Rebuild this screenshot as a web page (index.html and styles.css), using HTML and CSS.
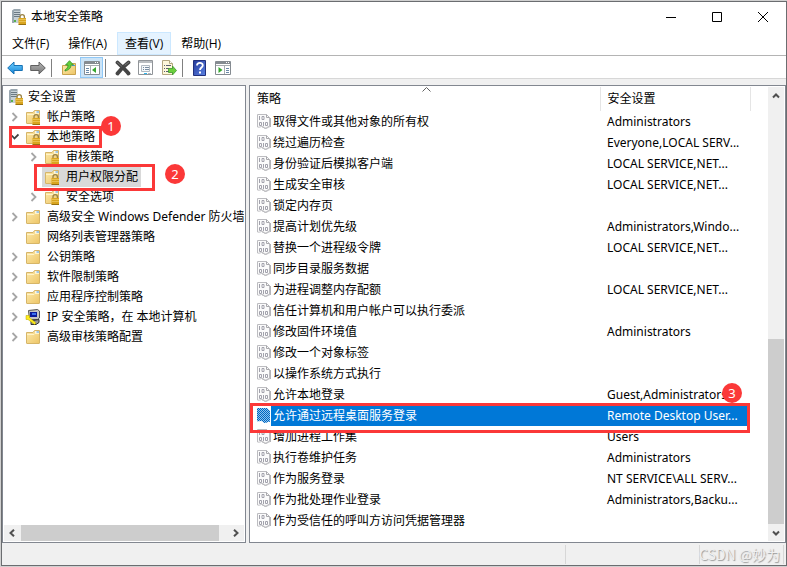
FILE: index.html
```html
<!DOCTYPE html>
<html lang="zh-CN">
<head>
    <meta charset="UTF-8">
    <meta name="viewport" content="width=device-width, initial-scale=1.0">
    <title>本地安全策略</title>
    <link rel="stylesheet" href="styles.css">
</head>
<body>

<!-- Icon shapes -->
<svg class="sprite" aria-hidden="true">
    <defs>
        <linearGradient id="gold" x1="0" y1="0" x2="1" y2="1">
            <stop offset="0" stop-color="#fdeaac"/>
            <stop offset="1" stop-color="#edc566"/>
        </linearGradient>
        <linearGradient id="blue" x1="0" y1="0" x2="0" y2="1">
            <stop offset="0" stop-color="#6fd0ff"/>
            <stop offset="1" stop-color="#1483d6"/>
        </linearGradient>
        <linearGradient id="grey" x1="0" y1="0" x2="0" y2="1">
            <stop offset="0" stop-color="#b5b5b5"/>
            <stop offset="1" stop-color="#777"/>
        </linearGradient>
        <linearGradient id="helpBlue" x1="0" y1="0" x2="1" y2="1">
            <stop offset="0" stop-color="#24399b"/>
            <stop offset="1" stop-color="#5b83e3"/>
        </linearGradient>
        <pattern id="dots" width="2" height="2" patternUnits="userSpaceOnUse">
            <rect width="2" height="2" fill="#8fc2ee"/>
            <rect width="1" height="1" fill="#0067c0"/>
            <rect x="1" y="1" width="1" height="1" fill="#0067c0"/>
        </pattern>
    </defs>
    <symbol id="lock" viewBox="0 0 16 16">
        <path d="M9 9.500V7.800a2.200 2.200 0 0 1 4.400 0v1.700" fill="none" stroke="#9a8347" stroke-width="1.300"/>
        <rect x="7.500" y="9" width="7.500" height="6.500" fill="#d9a520"/>
        <path d="M7.500 10.500H15M7.500 12.500H15" stroke="#e9c050"/>
        <path d="M7.500 15.500H15" stroke="#98700f"/>
    </symbol>
    <symbol id="server" viewBox="0 0 16 16">
        <path d="M1 1.500L3 0h6.500v14H1z" fill="#9aa7b0"/>
        <path d="M3 2h6v12H3z" fill="#c6d0d6"/>
        <path d="M3 3.500h6M3 5.500h6M3 7.500h6" stroke="#6c7a84"/>
        <rect x="3" y="11" width="2" height="2" fill="#58b04c"/>
        <use href="#lock"/>
    </symbol>
    <symbol id="folder" viewBox="0 0 16 16">
        <path d="M1.500 3.500H8l1.500-2h5v12.500a.5.5 0 0 1-.5.5H2a.5.5 0 0 1-.5-.5z" fill="url(#gold)" stroke="#d6b568"/>
        <path d="M10 3h4" stroke="#fff" stroke-width="1.500"/>
        <path d="M11.500 3H14" stroke="#4b9be0"/>
        <path d="M2 5.500h7l1-1h4" fill="none" stroke="#fff3c8"/>
    </symbol>
    <symbol id="folder-lock" viewBox="0 0 16 16">
        <use href="#folder"/>
        <use href="#lock"/>
    </symbol>
    <symbol id="ip" viewBox="0 0 16 16">
        <path d="M3.500 1.500l9-1 2 1.500v7l-2 1.500h-8z" fill="#c5c5c5" stroke="#555"/>
        <path d="M5 3h7v5H5z" fill="#0b1a9b"/>
        <path d="M7 4h4v2H7z" fill="#3a70f0"/>
        <path d="M6 12l8-1.500v3l-3 2H6z" fill="#999" stroke="#333"/>
        <path d="M1 6.500h3.500v2L11 14l-1.500 1.500L3 10.500H1z" fill="#ffed1b" stroke="#b5a300" stroke-width=".5"/>
    </symbol>
    <symbol id="back" viewBox="0 0 16 16">
        <path d="M.7 8L7 2v3.500h8.300v5H7V14z" fill="url(#blue)" stroke="#1671b4" stroke-linejoin="round"/>
    </symbol>
    <symbol id="forward" viewBox="0 0 16 16">
        <path d="M15.300 8L9 2v3.500H.7v5H9V14z" fill="url(#grey)" stroke="#606060" stroke-linejoin="round"/>
    </symbol>
    <symbol id="up" viewBox="0 0 16 16">
        <path d="M1.500 5.500h6l1.500-2h5.500v11h-13z" fill="url(#gold)" stroke="#c9a34e"/>
        <path d="M11 5.500h3" stroke="#4b9be0"/>
        <path d="M4 10c2-1 3-3 3-5H4.500L8.500.7 12.500 5H10c0 3-2 5-6 6z" fill="#62cf3a" stroke="#35912a" stroke-width=".8"/>
    </symbol>
    <symbol id="tree-view" viewBox="0 0 16 16">
        <path d="M.5 1.500h15v13H.5z" fill="#fff" stroke="#858b91"/>
        <path d="M1 2h14v2H1z" fill="#858b91"/>
        <path d="M1 5.500h14M6.500 6v8" stroke="#a8adb1"/>
        <path d="M2 8.500h3M2 10.500h3M2 12.500h3" stroke="#6a89a8"/>
        <path d="M12 7v6L8 10z" fill="#35a62e"/>
        <path d="M11 2.500h3" stroke="#fff" stroke-dasharray="1 1"/>
    </symbol>
    <symbol id="delete" viewBox="0 0 16 16">
        <path d="M2.500 2.500c3 3 8 7 11 11M13.500 2.500c-4 3-8 7-11 11" stroke="#454545" stroke-width="3.800" stroke-linecap="round"/>
        <path d="M2.500 2.500l4 3.500M13.500 2.500L10 5" stroke="#777" stroke-linecap="round"/>
    </symbol>
    <symbol id="props" viewBox="0 0 16 16">
        <path d="M.5.500h14v14H.5z" fill="#fff" stroke="#909498"/>
        <path d="M1 2h13" stroke="#b9bdc1" stroke-width="2"/>
        <path d="M3.500 5.500h8v6h-8z" fill="#f4f8fb" stroke="#b1b9c1"/>
        <path d="M5 7.500h1M7 7.500h4M5 9.500h1M7 9.500h4" stroke="#788ba0"/>
        <path d="M6 13.500h3" stroke="#2bb5ec"/>
        <path d="M10 13.500h3" stroke="#b1b9c1"/>
    </symbol>
    <symbol id="export" viewBox="0 0 16 16">
        <path d="M1.500.500h7l3 3v11h-10z" fill="#fdf7da" stroke="#b3a780"/>
        <path d="M8.500.500v3h3" fill="#fff" stroke="#b3a780"/>
        <path d="M3 5.500h1M5 5.500h5M3 8.500h1M5 8.500h3M3 11.500h1M5 11.500h3" stroke="#5b6070"/>
        <path d="M7.500 8.500h4V6l4 4.500-4 4.500v-2.500h-4z" fill="#6bd03d" stroke="#3d982e" stroke-width=".8"/>
    </symbol>
    <symbol id="help" viewBox="0 0 16 16">
        <path d="M1.500.500h12v15h-12z" fill="url(#helpBlue)" stroke="#22307c"/>
        <path d="M5 5.500C5 2 10.800 2 10.800 5.200 10.800 7.500 8 7.500 8 10" fill="none" stroke="#fff" stroke-width="1.800"/>
        <path d="M7 11.500h2v2H7z" fill="#fff"/>
    </symbol>
    <symbol id="action-view" viewBox="0 0 16 16">
        <path d="M.5 1.500h15v13H.5z" fill="#fff" stroke="#858b91"/>
        <path d="M1 2h14v2H1z" fill="#858b91"/>
        <path d="M1 5.500h14M9.500 6v8" stroke="#a8adb1"/>
        <path d="M11 8.500h3M11 10.500h3M11 12.500h3" stroke="#6a89a8"/>
        <path d="M3.500 7v6l4-3z" fill="#35a62e"/>
        <path d="M11 2.500h3" stroke="#fff" stroke-dasharray="1 1"/>
    </symbol>
    <symbol id="policy" viewBox="0 0 14 16">
        <path d="M.5 1.500h9l3 3v9c-1.500-.5-2 1.500-4 1.500s-2-2-4-1.500-2 1-4 .5z" fill="#fbfbfb" stroke="#bcbcc0"/>
        <path d="M9.500 1.500v3h3" fill="none" stroke="#a8a8ac"/>
        <path d="M2.500 3v4M5 3.500h2v3H5zM2.500 9.500h2v3h-2zM6.500 9v4M8.500 9.500h2v3h-2z" fill="none" stroke="#a2a2ac"/>
        <path d="M5 14c2 0 2 1.500 3.500 1.500S11 14 12.500 14M13.500 5v9" fill="none" stroke="#b4b4b8"/>
    </symbol>
    <symbol id="policy-selected" viewBox="0 0 14 16">
        <path d="M0 1h10l3 3v11c-2-1-3 1-5 1s-2-2-4-2-3 1-4 0z" fill="url(#dots)"/>
    </symbol>
    <symbol id="chevron" viewBox="0 0 8 10">
        <path d="M1.500 1l4 4-4 4" fill="none" stroke="#a6a6a6" stroke-width="1.800"/>
    </symbol>
    <symbol id="chevron-open" viewBox="0 0 8 10">
        <path d="M.8 3.500L3.500 6.500l4-4" fill="none" stroke="#404040" stroke-width="1.800"/>
    </symbol>
    <symbol id="arrow-up" viewBox="0 0 8 8">
        <path d="M1 5.500l3-3 3 3" fill="none" stroke="#505050" stroke-width="2"/>
    </symbol>
    <symbol id="arrow-down" viewBox="0 0 8 8">
        <path d="M1 2.500l3 3 3-3" fill="none" stroke="#505050" stroke-width="2"/>
    </symbol>
    <symbol id="arrow-left" viewBox="0 0 8 8">
        <path d="M5 .7L1.500 4 5 7.300" fill="none" stroke="#505050" stroke-width="2"/>
    </symbol>
    <symbol id="arrow-right" viewBox="0 0 8 8">
        <path d="M2 .7L5.500 4 2 7.300" fill="none" stroke="#505050" stroke-width="2"/>
    </symbol>
</svg>

<div class="window">
    <header class="title-bar">
        <svg class="icon"><use href="#server"/></svg>
        <h1>本地安全策略</h1>
        <div class="window-buttons">
            <button aria-label="最小化"><svg class="caption-icon" viewBox="0 0 12 12"><path d="M1 6.500h10"/></svg></button>
            <button aria-label="最大化"><svg class="caption-icon" viewBox="0 0 12 12"><path d="M1.500 1.500h9v9h-9z"/></svg></button>
            <button aria-label="关闭"><svg class="caption-icon" viewBox="0 0 12 12"><path d="M1 1l10 10M11 1L1 11"/></svg></button>
        </div>
    </header>

    <nav class="menu-bar">
        <button>文件(F)</button>
        <button>操作(A)</button>
        <button class="hover">查看(V)</button>
        <button>帮助(H)</button>
    </nav>

    <div class="toolbar">
        <button aria-label="后退"><svg class="icon"><use href="#back"/></svg></button>
        <button aria-label="前进"><svg class="icon"><use href="#forward"/></svg></button>
        <span class="separator"></span>
        <button aria-label="上一级"><svg class="icon"><use href="#up"/></svg></button>
        <button class="active" aria-label="显示控制台树"><svg class="icon"><use href="#tree-view"/></svg></button>
        <span class="separator"></span>
        <button aria-label="删除"><svg class="icon"><use href="#delete"/></svg></button>
        <button aria-label="属性"><svg class="icon"><use href="#props"/></svg></button>
        <button aria-label="导出列表"><svg class="icon"><use href="#export"/></svg></button>
        <span class="separator"></span>
        <button aria-label="帮助"><svg class="icon"><use href="#help"/></svg></button>
        <button aria-label="显示操作窗格"><svg class="icon"><use href="#action-view"/></svg></button>
    </div>

    <main class="panes">
        <section class="pane tree-pane">
            <div class="tree">
                <div class="node root"><span class="label"><svg class="icon"><use href="#server"/></svg>安全设置</span></div>
                <ul>
                    <li>
                        <div class="node"><button class="toggle" aria-label="展开"><svg><use href="#chevron"/></svg></button><span class="label"><svg class="icon"><use href="#folder-lock"/></svg>帐户策略</span></div>
                    </li>
                    <li>
                        <div class="node"><button class="toggle" aria-label="折叠"><svg><use href="#chevron-open"/></svg></button><span class="label"><svg class="icon"><use href="#folder-lock"/></svg>本地策略</span><span class="mark mark-1"></span><span class="step step-1">1</span></div>
                        <ul>
                            <li>
                                <div class="node"><button class="toggle" aria-label="展开"><svg><use href="#chevron"/></svg></button><span class="label"><svg class="icon"><use href="#folder-lock"/></svg>审核策略</span></div>
                            </li>
                            <li>
                                <div class="node"><span class="toggle"></span><span class="label selected"><svg class="icon"><use href="#folder-lock"/></svg>用户权限分配</span><span class="mark mark-2"></span><span class="step step-2">2</span></div>
                            </li>
                            <li>
                                <div class="node"><button class="toggle" aria-label="展开"><svg><use href="#chevron"/></svg></button><span class="label"><svg class="icon"><use href="#folder-lock"/></svg>安全选项</span></div>
                            </li>
                        </ul>
                    </li>
                    <li>
                        <div class="node"><button class="toggle" aria-label="展开"><svg><use href="#chevron"/></svg></button><span class="label"><svg class="icon"><use href="#folder"/></svg>高级安全 Windows Defender 防火墙</span></div>
                    </li>
                    <li>
                        <div class="node"><span class="toggle"></span><span class="label"><svg class="icon"><use href="#folder"/></svg>网络列表管理器策略</span></div>
                    </li>
                    <li>
                        <div class="node"><button class="toggle" aria-label="展开"><svg><use href="#chevron"/></svg></button><span class="label"><svg class="icon"><use href="#folder"/></svg>公钥策略</span></div>
                    </li>
                    <li>
                        <div class="node"><button class="toggle" aria-label="展开"><svg><use href="#chevron"/></svg></button><span class="label"><svg class="icon"><use href="#folder"/></svg>软件限制策略</span></div>
                    </li>
                    <li>
                        <div class="node"><button class="toggle" aria-label="展开"><svg><use href="#chevron"/></svg></button><span class="label"><svg class="icon"><use href="#folder"/></svg>应用程序控制策略</span></div>
                    </li>
                    <li>
                        <div class="node"><button class="toggle" aria-label="展开"><svg><use href="#chevron"/></svg></button><span class="label"><svg class="icon"><use href="#ip"/></svg>IP 安全策略，在 本地计算机</span></div>
                    </li>
                    <li>
                        <div class="node"><button class="toggle" aria-label="展开"><svg><use href="#chevron"/></svg></button><span class="label"><svg class="icon"><use href="#folder"/></svg>高级审核策略配置</span></div>
                    </li>
                </ul>
            </div>
            <div class="scrollbar horizontal">
                <button aria-label="向左滚动"><svg><use href="#arrow-left"/></svg></button>
                <div class="track"><div class="thumb"></div></div>
                <button aria-label="向右滚动"><svg><use href="#arrow-right"/></svg></button>
            </div>
        </section>

        <section class="pane list-pane">
            <div class="list">
                <svg class="sort-arrow" viewBox="0 0 9 5"><path d="M.5 4.500l4-4 4 4"/></svg>
                <table>
                    <colgroup>
                        <col>
                        <col class="setting-col">
                        <col class="end-col">
                    </colgroup>
                    <thead>
                        <tr><th scope="col">策略</th><th scope="col">安全设置</th><td></td></tr>
                    </thead>
                    <tbody>
                        <tr><td><div class="policy"><svg><use href="#policy"/></svg><span>取得文件或其他对象的所有权</span></div></td><td>Administrators</td><td></td></tr>
                        <tr><td><div class="policy"><svg><use href="#policy"/></svg><span>绕过遍历检查</span></div></td><td>Everyone,LOCAL SERV...</td><td></td></tr>
                        <tr><td><div class="policy"><svg><use href="#policy"/></svg><span>身份验证后模拟客户端</span></div></td><td>LOCAL SERVICE,NET...</td><td></td></tr>
                        <tr><td><div class="policy"><svg><use href="#policy"/></svg><span>生成安全审核</span></div></td><td>LOCAL SERVICE,NET...</td><td></td></tr>
                        <tr><td><div class="policy"><svg><use href="#policy"/></svg><span>锁定内存页</span></div></td><td></td><td></td></tr>
                        <tr><td><div class="policy"><svg><use href="#policy"/></svg><span>提高计划优先级</span></div></td><td>Administrators,Windo...</td><td></td></tr>
                        <tr><td><div class="policy"><svg><use href="#policy"/></svg><span>替换一个进程级令牌</span></div></td><td>LOCAL SERVICE,NET...</td><td></td></tr>
                        <tr><td><div class="policy"><svg><use href="#policy"/></svg><span>同步目录服务数据</span></div></td><td></td><td></td></tr>
                        <tr><td><div class="policy"><svg><use href="#policy"/></svg><span>为进程调整内存配额</span></div></td><td>LOCAL SERVICE,NET...</td><td></td></tr>
                        <tr><td><div class="policy"><svg><use href="#policy"/></svg><span>信任计算机和用户帐户可以执行委派</span></div></td><td></td><td></td></tr>
                        <tr><td><div class="policy"><svg><use href="#policy"/></svg><span>修改固件环境值</span></div></td><td>Administrators</td><td></td></tr>
                        <tr><td><div class="policy"><svg><use href="#policy"/></svg><span>修改一个对象标签</span></div></td><td></td><td></td></tr>
                        <tr><td><div class="policy"><svg><use href="#policy"/></svg><span>以操作系统方式执行</span></div></td><td></td><td></td></tr>
                        <tr><td><div class="policy"><svg><use href="#policy"/></svg><span>允许本地登录</span></div></td><td>Guest,Administrators</td><td></td></tr>
                        <tr class="selected"><td><div class="policy"><svg><use href="#policy-selected"/></svg><span>允许通过远程桌面服务登录</span></div></td><td>Remote Desktop User...</td><td><span class="mark mark-3"></span><span class="step step-3">3</span></td></tr>
                        <tr><td><div class="policy"><svg><use href="#policy"/></svg><span>增加进程工作集</span></div></td><td>Users</td><td></td></tr>
                        <tr><td><div class="policy"><svg><use href="#policy"/></svg><span>执行卷维护任务</span></div></td><td>Administrators</td><td></td></tr>
                        <tr><td><div class="policy"><svg><use href="#policy"/></svg><span>作为服务登录</span></div></td><td>NT SERVICE\ALL SERV...</td><td></td></tr>
                        <tr><td><div class="policy"><svg><use href="#policy"/></svg><span>作为批处理作业登录</span></div></td><td>Administrators,Backu...</td><td></td></tr>
                        <tr><td><div class="policy"><svg><use href="#policy"/></svg><span>作为受信任的呼叫方访问凭据管理器</span></div></td><td></td><td></td></tr>
                    </tbody>
                </table>
            </div>
            <div class="scrollbar vertical">
                <button aria-label="向上滚动"><svg><use href="#arrow-up"/></svg></button>
                <div class="track"><div class="thumb"></div></div>
                <button aria-label="向下滚动"><svg><use href="#arrow-down"/></svg></button>
            </div>
        </section>
    </main>

    <footer class="status-bar">
        <span class="status-main"></span>
        <span class="status-mid"></span>
        <span class="status-end"></span>
        <span class="watermark">CSDN @妙为</span>
    </footer>
</div>

</body>
</html>
```
FILE: styles.css
```css
* {
    box-sizing: border-box;
}

body {
    margin: 0;
    padding: 1px 0 1px 1px;
    height: 100vh;
    background-color: #d0d0d0;
    color: #000000;
    font-family: "Noto Sans", "Noto Sans CJK SC", sans-serif;
    font-size: 12px;
    line-height: 20px;
}

button {
    display: flex;
    align-items: center;
    justify-content: center;
    margin: 0;
    padding: 0;
    border: none;
    background: none;
    color: inherit;
    font: inherit;
}

ul {
    list-style: none;
    margin: 0;
    padding: 0;
}

svg {
    display: block;
    flex: none;
}

.sprite {
    position: absolute;
    width: 0;
    height: 0;
}

.icon {
    width: 16px;
    height: 16px;
}

.window {
    display: flex;
    flex-direction: column;
    height: 100%;
    border: 1px solid #6b6d70;
    background-color: #f0f0f0;
}

/* Title bar */
.title-bar {
    display: flex;
    align-items: center;
    height: 30px;
    padding-left: 9px;
    background-color: #ffffff;
}

.title-bar h1 {
    margin: 0 0 0 4px;
    font-size: 12px;
    font-weight: normal;
}

.window-buttons {
    display: flex;
    height: 100%;
    margin-left: auto;
}

.window-buttons button {
    width: 46px;
}

.caption-icon {
    width: 12px;
    height: 12px;
    fill: none;
    stroke: #000000;
}

/* Menu */
.menu-bar {
    display: flex;
    gap: 1px;
    height: 24px;
    padding: 0 1px;
    border-bottom: 1px solid #b4b4b4;
    background-color: #ffffff;
    font-family: "Open Sans", "Noto Sans CJK SC", sans-serif;
}

.menu-bar button {
    padding: 1px 8px 0;
    border: 1px solid transparent;
}

.menu-bar .hover {
    padding: 1px 7px 0;
    border-color: #cce8ff;
    background-color: #e5f3ff;
}

/* Toolbar */
.toolbar {
    display: flex;
    height: 23px;
    padding: 1px 2px 0 1px;
    border-bottom: 1px solid #d7d7d7;
    background-color: #ffffff;
}

.toolbar button {
    width: 23px;
}

.toolbar .active {
    border: 1px solid #90c8f6;
    background-color: #cce4f7;
}

.separator {
    width: 8px;
    padding-left: 2px;
}

.separator::before {
    content: "";
    display: block;
    width: 1px;
    height: 18px;
    margin-top: 2px;
    background-color: #808080;
}

/* Panes */
.panes {
    display: flex;
    flex: 1;
    gap: 3px;
    min-height: 0;
    padding-top: 6px;
}

.pane {
    display: flex;
    min-width: 0;
    border: 1px solid #828790;
    background-color: #ffffff;
    overflow: hidden;
}

.tree-pane {
    flex: 0 0 244px;
    flex-direction: column;
    padding: 1px;
}

.list-pane {
    flex: 1;
    padding: 1px 1px 1px 0;
}

/* Tree */
.tree {
    flex: 1;
    min-height: 0;
    overflow: hidden;
    white-space: nowrap;
}

.tree > ul {
    padding-left: 2px;
}

.tree ul ul {
    padding-left: 19px;
}

.node {
    position: relative;
    display: flex;
    height: 20px;
}

.node.root {
    padding-left: 2px;
}

.toggle {
    flex: none;
    width: 17px;
    height: 20px;
}

.toggle svg {
    width: 8px;
    height: 10px;
}

.label {
    display: flex;
    align-items: center;
    gap: 6px;
    padding: 0 3px 0 2px;
}

.root .label {
    gap: 4px;
}

.label.selected {
    background-color: #d9d9d9;
}

/* Policy list */
.list {
    position: relative;
    flex: 1;
    min-width: 0;
}

.sort-arrow {
    position: absolute;
    top: 0;
    left: 172px;
    width: 9px;
    height: 5px;
    fill: none;
    stroke: #606060;
}

table {
    width: 100%;
    border-collapse: collapse;
    table-layout: fixed;
    white-space: nowrap;
}

.setting-col {
    width: 150px;
}

.end-col {
    width: 18px;
}

th,
td {
    height: 21px;
    padding: 0 0 0 7px;
    font-weight: normal;
    text-align: left;
}

thead th {
    height: 24px;
    border-right: 1px solid #e5e5e5;
}

.policy {
    display: flex;
    align-items: center;
    height: 21px;
}

.policy svg {
    width: 14px;
    height: 16px;
    margin-bottom: 1px;
}

.policy span {
    flex: 1;
    padding-left: 2px;
}

tr.selected {
    position: relative;
    color: #ffffff;
}

.selected .policy span,
tr.selected td:nth-child(2) {
    background-color: #0078d7;
}

/* Scrollbars */
.scrollbar {
    display: flex;
    flex: none;
    background-color: #f0f0f0;
}

.scrollbar svg {
    width: 8px;
    height: 8px;
}

.scrollbar .track {
    display: flex;
    flex: 1;
}

.scrollbar .thumb {
    background-color: #cdcdcd;
}

.horizontal {
    height: 16px;
}

.horizontal button {
    width: 17px;
}

.horizontal .thumb {
    width: 96%;
}

.vertical {
    flex-direction: column;
    width: 16px;
}

.vertical button {
    height: 17px;
}

.vertical .track {
    align-items: flex-end;
}

.vertical .thumb {
    width: 100%;
    height: 44%;
}

/* Step marks */
.mark {
    position: absolute;
    z-index: 1;
    border: 3px solid #fb3838;
}

.step {
    position: absolute;
    z-index: 2;
    width: 20px;
    height: 20px;
    border-radius: 50%;
    background-color: #fb3838;
    color: #ffffff;
    font-size: 13px;
    text-align: center;
}

.mark-1 {
    top: -1px;
    left: 3px;
    width: 93px;
    height: 22px;
}

.step-1 {
    top: -11px;
    left: 95px;
}

.mark-2 {
    top: -3px;
    left: 9px;
    width: 121px;
    height: 27px;
}

.step-2 {
    top: -3px;
    left: 140px;
}

.mark-3 {
    top: -2px;
    right: 18px;
    left: 0;
    height: 30px;
}

.step-3 {
    top: -22px;
    right: 26px;
}

/* Status bar */
.status-bar {
    position: relative;
    display: flex;
    height: 22px;
    padding: 2px 2px 1px 0;
}

.status-bar span {
    border-right: 1px solid #d7d7d7;
}

.status-main {
    flex: 1;
}

.status-mid {
    width: 134px;
}

.status-end {
    width: 84px;
}

.status-bar .watermark {
    position: absolute;
    right: 6px;
    bottom: 1px;
    border: none;
    color: #f0f0f0;
    font-family: "Noto Sans CJK SC", sans-serif;
    font-size: 14px;
    text-shadow: 1px 1px 1px #999999;
}
```
